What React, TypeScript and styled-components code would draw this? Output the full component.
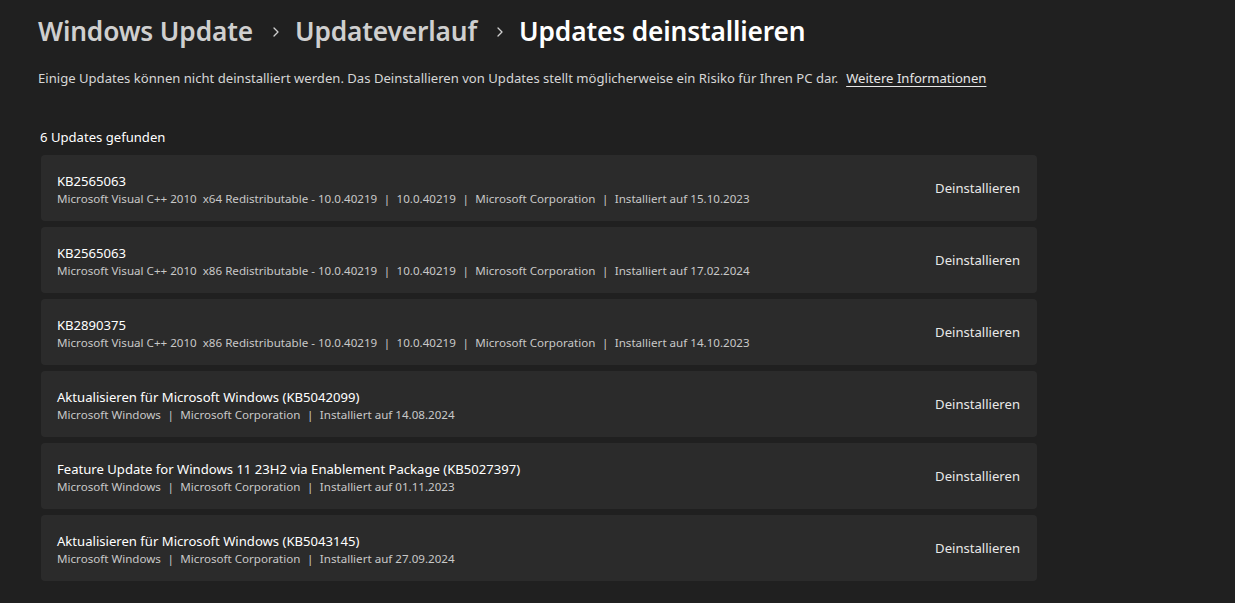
import styled, { createGlobalStyle } from "styled-components";

const GlobalStyle = createGlobalStyle`
  html, body {
    margin: 0;
    padding: 0;
    background: #202020;
  }
  body {
    font-family: "Noto Sans", "Open Sans", sans-serif;
    color: #ffffff;
    -webkit-font-smoothing: antialiased;
  }
`;

const Page = styled.div`
  width: 1235px;
  height: 603px;
  background: #202020;
  box-sizing: border-box;
  padding: 11px 0 0 38px;
  overflow: hidden;
`;

const Breadcrumb = styled.h1`
  display: flex;
  align-items: center;
  margin: 0;
  height: 40px;
  font-size: 26.3px;
  font-weight: 600;
  letter-spacing: -0.15px;
`;

const Crumb = styled.span<{ $active?: boolean }>`
  color: ${(p) => (p.$active ? "#ffffff" : "#cfcfcf")};
`;

const Chevron = styled.svg`
  width: 12px;
  height: 12px;
  margin: 2px 13px 0 17px;
`;

const Intro = styled.p`
  margin: 17px 0 0;
  font-size: 13.1px;
  color: #d6d6d6;
  line-height: 20px;
`;

const Link = styled.a`
  color: #e6e6e6;
  text-decoration: underline;
  text-underline-offset: 3px;
  margin-left: 8px;
`;

const Count = styled.div`
  margin: 39px 0 0 2px;
  font-size: 13.1px;
  line-height: 20px;
  color: #ffffff;
`;

const List = styled.div`
  display: flex;
  flex-direction: column;
  gap: 6px;
  width: 996px;
  margin: 8px 0 0 3px;
`;

const Card = styled.div`
  display: flex;
  align-items: center;
  justify-content: space-between;
  height: 66px;
  box-sizing: border-box;
  padding: 0 17px 0 16px;
  background: #2b2b2b;
  border-radius: 4px;
`;

const Info = styled.div`
  display: flex;
  flex-direction: column;
  margin-top: 2px;
`;

const Title = styled.div`
  font-size: 13.1px;
  line-height: 20px;
  color: #ffffff;
`;

const Meta = styled.div`
  font-size: 11.6px;
  line-height: 16px;
  color: #c8c8c8;
  white-space: pre;
`;

const Sep = styled.span`
  margin: 0 6.5px;
`;

const Action = styled.button`
  background: none;
  border: none;
  padding: 0;
  font-family: inherit;
  font-size: 13.1px;
  color: #e8e8e8;
  cursor: pointer;
`;

const updates = [
  {
    title: "KB2565063",
    meta: ["Microsoft Visual C++ 2010  x64 Redistributable - 10.0.40219", "10.0.40219", "Microsoft Corporation", "Installiert auf 15.10.2023"],
  },
  {
    title: "KB2565063",
    meta: ["Microsoft Visual C++ 2010  x86 Redistributable - 10.0.40219", "10.0.40219", "Microsoft Corporation", "Installiert auf 17.02.2024"],
  },
  {
    title: "KB2890375",
    meta: ["Microsoft Visual C++ 2010  x86 Redistributable - 10.0.40219", "10.0.40219", "Microsoft Corporation", "Installiert auf 14.10.2023"],
  },
  {
    title: "Aktualisieren für Microsoft Windows (KB5042099)",
    meta: ["Microsoft Windows", "Microsoft Corporation", "Installiert auf 14.08.2024"],
  },
  {
    title: "Feature Update for Windows 11 23H2 via Enablement Package (KB5027397)",
    meta: ["Microsoft Windows", "Microsoft Corporation", "Installiert auf 01.11.2023"],
  },
  {
    title: "Aktualisieren für Microsoft Windows (KB5043145)",
    meta: ["Microsoft Windows", "Microsoft Corporation", "Installiert auf 27.09.2024"],
  },
];

function ChevronIcon() {
  return (
    <Chevron viewBox="0 0 12 12">
      <path d="M4 2 L8 6 L4 10" fill="none" stroke="#cfcfcf" strokeWidth="1.3" strokeLinecap="round" strokeLinejoin="round" />
    </Chevron>
  );
}

export default function App() {
  return (
    <Page>
      <GlobalStyle />
      <Breadcrumb>
        <Crumb>Windows Update</Crumb>
        <ChevronIcon />
        <Crumb>Updateverlauf</Crumb>
        <ChevronIcon />
        <Crumb $active>Updates deinstallieren</Crumb>
      </Breadcrumb>
      <Intro>
        Einige Updates können nicht deinstalliert werden. Das Deinstallieren von Updates stellt möglicherweise ein Risiko für Ihren PC dar.
        <Link>Weitere Informationen</Link>
      </Intro>
      <Count>6 Updates gefunden</Count>
      <List>
        {updates.map((u, i) => (
          <Card key={i}>
            <Info>
              <Title>{u.title}</Title>
              <Meta>
                {u.meta.map((m, j) => (
                  <span key={j}>
                    {j > 0 && <Sep>|</Sep>}
                    {m}
                  </span>
                ))}
              </Meta>
            </Info>
            <Action>Deinstallieren</Action>
          </Card>
        ))}
      </List>
    </Page>
  );
}
